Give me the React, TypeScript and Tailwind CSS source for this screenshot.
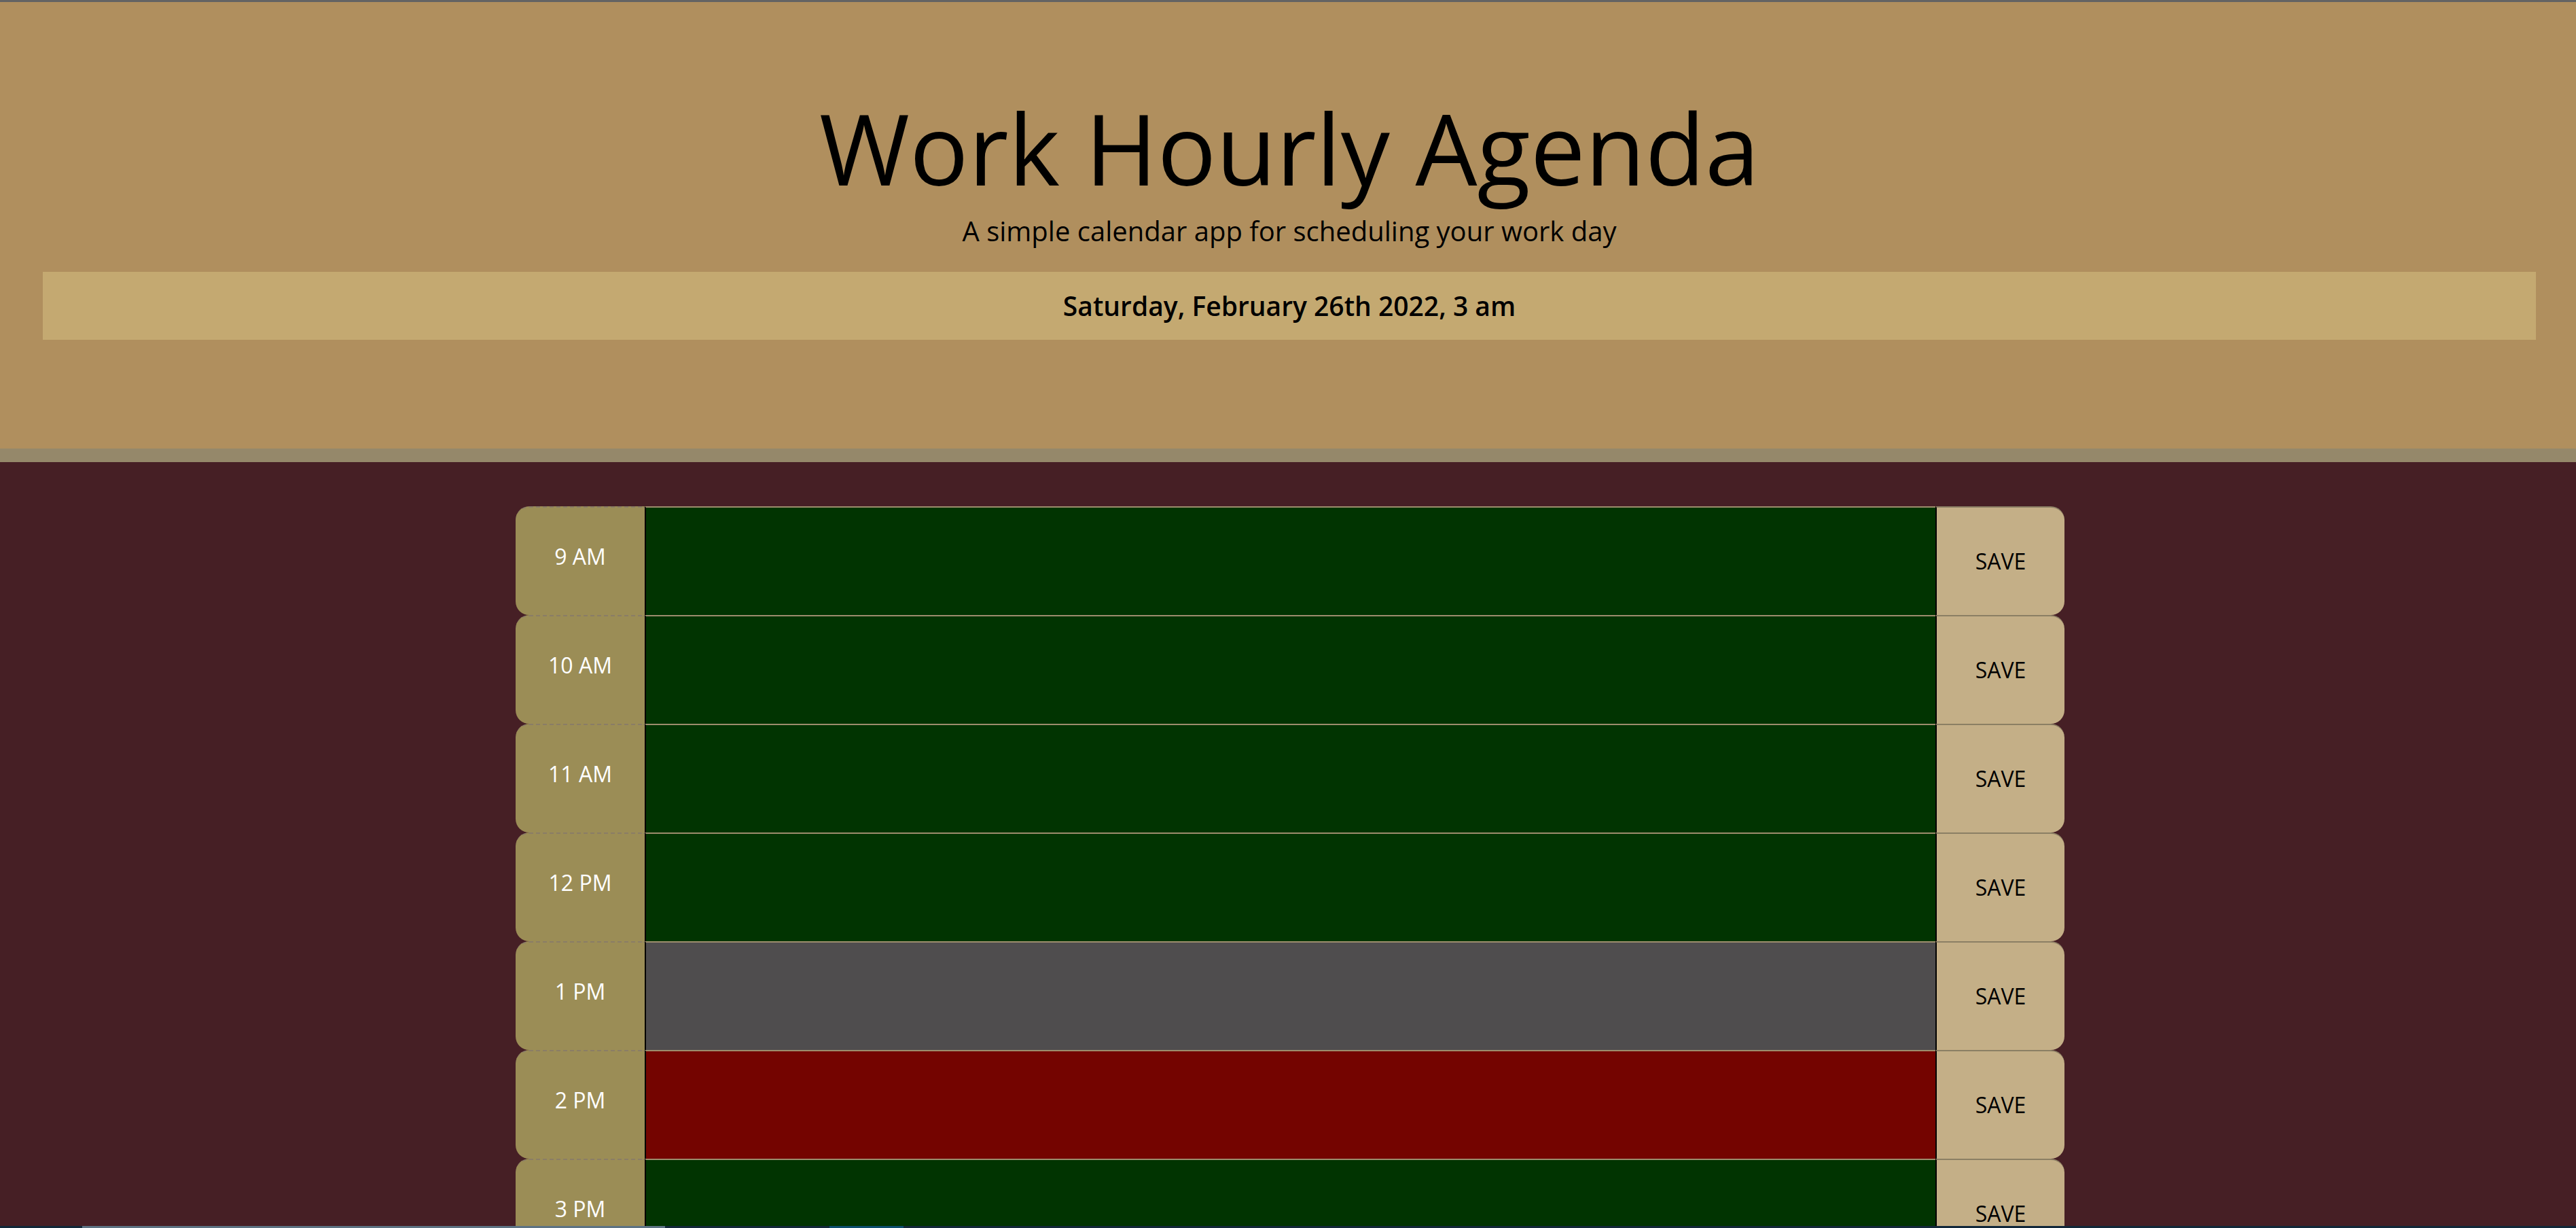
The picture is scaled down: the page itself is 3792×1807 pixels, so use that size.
const hours = [
  { label: "9 AM", tone: "future" },
  { label: "10 AM", tone: "future" },
  { label: "11 AM", tone: "future" },
  { label: "12 PM", tone: "future" },
  { label: "1 PM", tone: "past" },
  { label: "2 PM", tone: "present" },
  { label: "3 PM", tone: "future" },
  { label: "4 PM", tone: "future" },
  { label: "5 PM", tone: "future" },
]

const toneClass: Record<string, string> = {
  past: "bg-[#4f4d4e]",
  present: "bg-[#740400]",
  future: "bg-[#013401]",
}

function TimeBlock({ label, tone }: { label: string; tone: string }) {
  return (
    <div className="flex h-[160px]">
      <div className="w-[190px] shrink-0 flex items-center justify-center pb-[14px] bg-[#9b8d56] rounded-l-[20px] border-t-2 border-dashed border-[#8a7d66] text-white text-[32px]">
        {label}
      </div>
      <textarea
        className={`flex-1 resize-none outline-none border-t-2 border-[#9d8d6d] border-l-2 border-l-black p-5 text-[32px] text-white ${toneClass[tone]}`}
      />
      <button className="w-[190px] shrink-0 flex items-center justify-center bg-[#c4af87] rounded-r-[20px] border-t-2 border-[#8b7f64] border-l-2 border-l-black text-black text-[32px]">
        SAVE
      </button>
    </div>
  )
}

export default function App() {
  return (
    <div
      className="h-[1807px] overflow-hidden bg-[#461f25]"
      style={{ fontFamily: '"Open Sans", "Liberation Sans", sans-serif' }}
    >
      <div className="h-[3px] bg-[#636363]" />
      <header className="bg-[#b08f5e] border-b-[20px] border-[#95886a] pl-[63px] pr-[59px] pt-[128px] pb-[160px] text-center text-black">
        <h1 className="text-[144px] font-normal leading-[173px]">Work Hourly Agenda</h1>
        <p className="mt-[6px] text-[40px] leading-[60px]">A simple calendar app for scheduling your work day</p>
        <div className="mt-[30px] h-[100px] flex items-center justify-center bg-[#c4a971] text-[39px] font-semibold">
          Saturday, February 26th 2022, 3 am
        </div>
      </header>

      <div className="w-[2280px] ml-[759px] pt-[65px]">
        {hours.map((h) => (
          <TimeBlock key={h.label} label={h.label} tone={h.tone} />
        ))}
      </div>

      <div className="fixed bottom-0 left-0 right-0 h-[3px] bg-[#12283a] flex">
        <div className="ml-[121px] w-[858px] bg-[#5d7384]" />
        <div className="ml-[242px] w-[109px] bg-[#0d4f6e]" />
      </div>
    </div>
  )
}
